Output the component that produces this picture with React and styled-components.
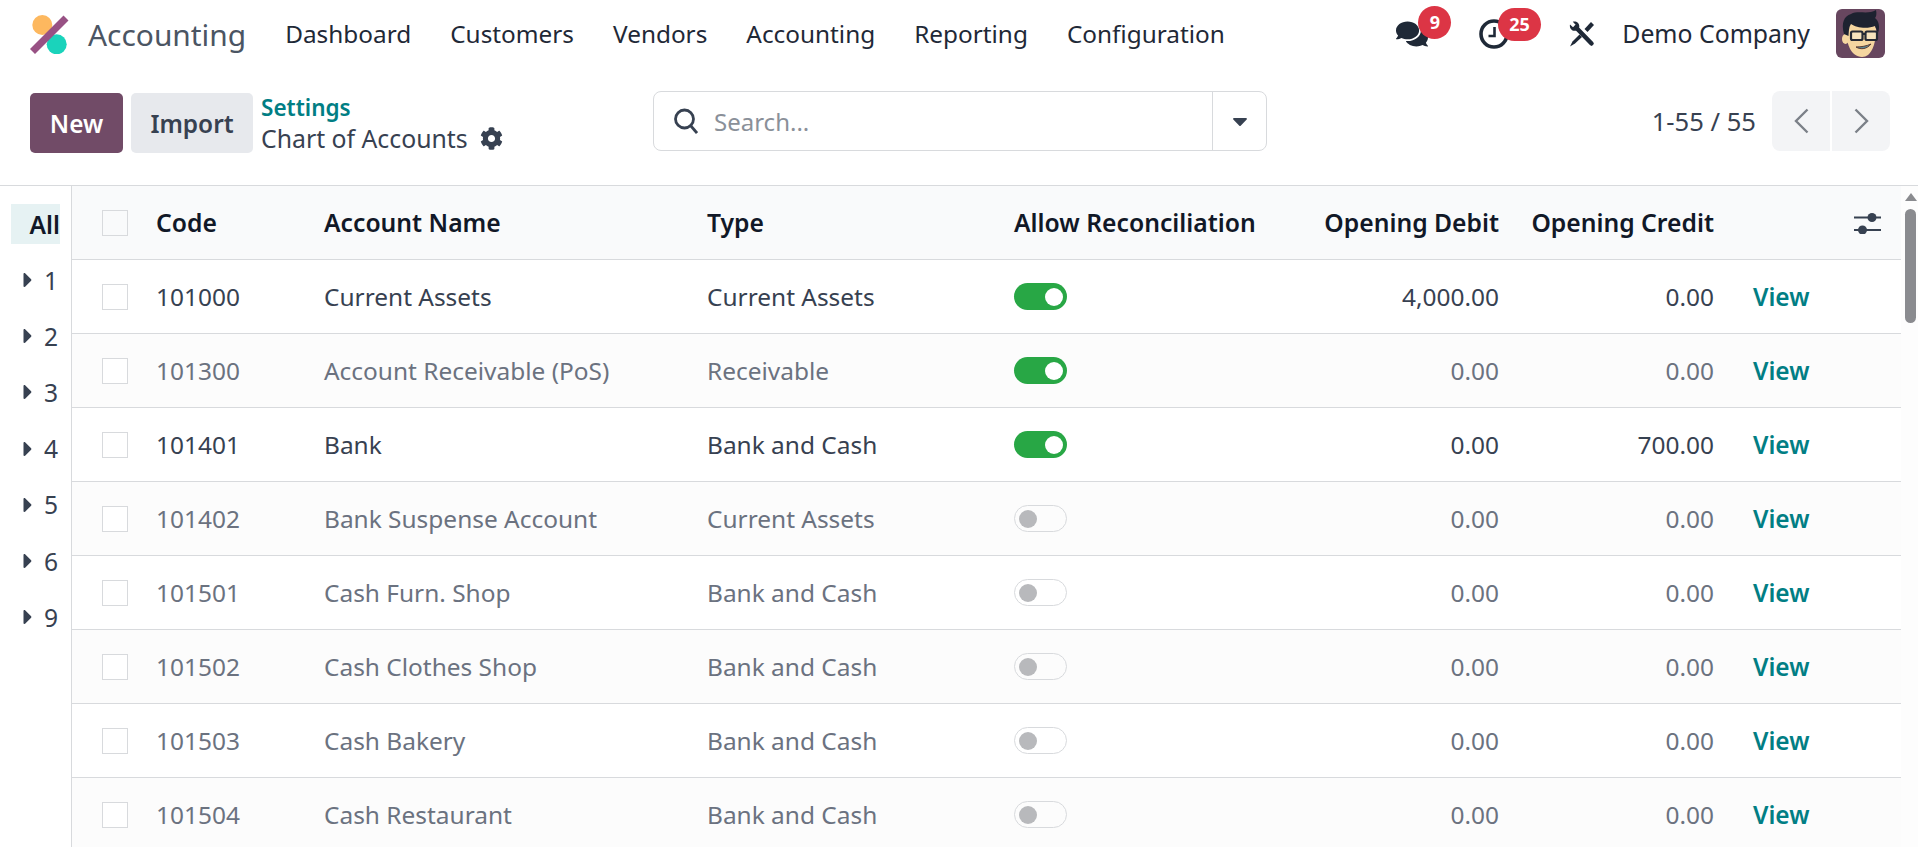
import React from "react";
import styled, { createGlobalStyle } from "styled-components";
import { FaComments, FaCog, FaCaretDown, FaCaretRight } from "react-icons/fa";

const Global = createGlobalStyle`
  html, body { margin: 0; padding: 0; background: #fff; }
  body { font-family: "Noto Sans", "Open Sans", sans-serif; color: #374151; overflow: hidden; }
  * { box-sizing: border-box; }
`;

const Page = styled.div`
  width: 1918px;
  height: 847px;
  display: flex;
  flex-direction: column;
  overflow: hidden;
`;

const NavBar = styled.header`
  height: 67px;
  flex: none;
  display: flex;
  align-items: center;
  padding: 0 33px 0 29px;
`;
const BrandLogo = styled.svg`
  width: 40px;
  height: 40px;
  flex: none;
`;
const BrandName = styled.span`
  margin: 2px 0 0 19px;
  font-size: 29.9px;
  color: #4b5563;
  line-height: 1;
`;
const Menu = styled.nav`
  display: flex;
  gap: 39px;
  margin: 0 0 1px 39px;
  font-size: 24.35px;
  color: #1f2937;
`;
const Tray = styled.div`
  margin-left: auto;
  display: flex;
  align-items: center;
`;
const TrayIcon = styled.div`
  position: relative;
  display: flex;
  color: #1f2937;
  margin-left: ${(p) => p.$ml}px;
`;
const Badge = styled.span`
  position: absolute;
  left: ${(p) => p.$left}px;
  top: ${(p) => p.$top}px;
  height: 33px;
  min-width: 33px;
  padding: 0 ${(p) => p.$pad}px;
  border-radius: 17px;
  background: #dc3545;
  color: #fff;
  font-size: 18px;
  font-weight: 700;
  display: flex;
  align-items: center;
  justify-content: center;
`;
const CompanyName = styled.span`
  margin: 0 0 1px 27px;
  font-size: 24.8px;
  color: #1f2937;
`;
const Avatar = styled.svg`
  width: 49px;
  height: 49px;
  margin-left: 26px;
  border-radius: 6px;
  flex: none;
`;

const ControlPanel = styled.section`
  height: 119px;
  flex: none;
  display: flex;
  align-items: flex-start;
  padding: 24px 28px 0 30px;
  border-bottom: 1px solid #d8dadd;
`;
const ButtonGroup = styled.div`
  display: flex;
  gap: 8px;
  margin-top: 2px;
`;
const Button = styled.button`
  height: 60px;
  width: ${(p) => p.$w}px;
  border: 0;
  padding: 0;
  border-radius: 5px;
  font: 600 24.4px "Noto Sans", sans-serif;
  color: ${(p) => (p.$primary ? "#fff" : "#374151")};
  background: ${(p) => (p.$primary ? "#714b67" : "#e7e9ed")};
`;
const Crumbs = styled.div`
  margin: 1px 0 0 8px;
  width: 392px;
  font-size: 24.8px;
  line-height: 31px;
`;
const CrumbLink = styled.div`
  color: #017e84;
  font-weight: 600;
  font-size: 22.5px;
`;
const CrumbCurrent = styled.div`
  display: flex;
  align-items: center;
  gap: 12px;
  color: #374151;
`;
const SearchBox = styled.div`
  width: 614px;
  height: 60px;
  display: flex;
  border: 1px solid #d8dadd;
  border-radius: 8px;
`;
const SearchField = styled.div`
  flex: 1;
  display: flex;
  align-items: center;
  gap: 16px;
  padding-left: 20px;
  font-size: 24px;
  color: #8a9099;
`;
const SearchToggle = styled.div`
  width: 54px;
  display: flex;
  align-items: center;
  justify-content: center;
  color: #374151;
  border-left: 1px solid #d8dadd;
`;
const Pager = styled.div`
  margin-left: auto;
  display: flex;
  align-items: center;
  gap: 16px;
  font-size: 25.6px;
  color: #374151;
`;
const PagerButtons = styled.div`
  display: flex;
  gap: 2px;
`;
const PagerButton = styled.div`
  width: 58px;
  height: 60px;
  display: flex;
  align-items: center;
  justify-content: center;
  background: #f3f4f6;
  border-radius: ${(p) => (p.$left ? "8px 0 0 8px" : "0 8px 8px 0")};
`;

const Main = styled.main`
  flex: 1;
  min-height: 0;
  display: flex;
`;
const Sidebar = styled.aside`
  width: 72px;
  flex: none;
  padding: 18px 11px 0 0;
  border-right: 1px solid #d8dadd;
  font-size: 24.6px;
  color: #374151;
`;
const SideAll = styled.div`
  margin-left: 11px;
  height: 40px;
  display: flex;
  align-items: center;
  justify-content: flex-end;
  background: #e6f2f3;
  font-weight: 600;
  color: #111827;
`;
const SideItem = styled.div`
  height: 56.2px;
  display: flex;
  align-items: center;
  padding-left: 16px;
  gap: 4px;
  margin-top: ${(p) => (p.$first ? "8px" : "0")};
`;
const TableArea = styled.div`
  flex: 1;
  min-width: 0;
`;
const COLS = "84px 168px 383px 307px 276px 209px 215px 1fr";
const HeadRow = styled.div`
  display: grid;
  grid-template-columns: ${COLS};
  align-items: center;
  height: 74.05px;
  background: #f9fafb;
  border-bottom: 1px solid #d8dadd;
  font-weight: 600;
  font-size: 24.7px;
  color: #111827;
`;
const Row = styled.div`
  display: grid;
  grid-template-columns: ${COLS};
  align-items: center;
  height: 74.05px;
  background: ${(p) => (p.$striped ? "#fcfcfc" : "#fff")};
  border-bottom: 1px solid #d8dadd;
  font-size: 24.45px;
  color: ${(p) => (p.$muted ? "#6b7280" : "#374151")};
`;
const CheckCell = styled.div`
  padding-left: 30px;
  display: flex;
`;
const Check = styled.span`
  width: 26px;
  height: 26px;
  border: 1px solid #d8dadd;
  background: ${(p) => (p.$head ? "#f9fafb" : "#fff")};
`;
const Cell = styled.div`
  text-align: ${(p) => (p.$right ? "right" : "left")};
  white-space: nowrap;
`;
const HeadAction = styled.div`
  display: flex;
  justify-content: flex-end;
  padding-right: 20px;
  color: #374151;
`;
const ViewLink = styled.div`
  padding-left: 39px;
  color: #017e84;
  font-weight: 600;
`;
const Toggle = styled.span`
  display: flex;
  align-items: center;
  justify-content: ${(p) => (p.$on ? "flex-end" : "flex-start")};
  width: 53px;
  height: 27px;
  padding: 0 4px;
  border-radius: 14px;
  background: ${(p) => (p.$on ? "#28a745" : "transparent")};
  border: ${(p) => (p.$on ? "0" : "1px solid #d8dadd")};
`;
const Knob = styled.span`
  width: 18px;
  height: 18px;
  border-radius: 50%;
  background: ${(p) => (p.$on ? "#fff" : "#b8b9bc")};
`;
const ScrollColumn = styled.div`
  width: 17px;
  flex: none;
  background: #fdfdfd;
  padding: 7px 1px 0 3px;
  display: flex;
  flex-direction: column;
  align-items: center;
`;
const ScrollArrow = styled.span`
  width: 0;
  height: 0;
  border-left: 6.5px solid transparent;
  border-right: 6.5px solid transparent;
  border-bottom: 8px solid #8a8b8f;
`;
const ScrollThumb = styled.span`
  margin-top: 8px;
  width: 11px;
  height: 114px;
  border-radius: 6px;
  background: #8a8b8f;
`;

const rows = [
  ["101000", "Current Assets", "Current Assets", true, "4,000.00", "0.00", false],
  ["101300", "Account Receivable (PoS)", "Receivable", true, "0.00", "0.00", true],
  ["101401", "Bank", "Bank and Cash", true, "0.00", "700.00", false],
  ["101402", "Bank Suspense Account", "Current Assets", false, "0.00", "0.00", true],
  ["101501", "Cash Furn. Shop", "Bank and Cash", false, "0.00", "0.00", true],
  ["101502", "Cash Clothes Shop", "Bank and Cash", false, "0.00", "0.00", true],
  ["101503", "Cash Bakery", "Bank and Cash", false, "0.00", "0.00", true],
  ["101504", "Cash Restaurant", "Bank and Cash", false, "0.00", "0.00", true],
];

const Logo = () => (
  <BrandLogo viewBox="0 0 40 40">
    <circle cx="13.3" cy="11" r="10" fill="#fdb85f" />
    <circle cx="27.7" cy="30.3" r="10" fill="#1ad3bb" />
    <path d="M37 4 L3.5 37.5" stroke="#985184" strokeWidth="7" />
  </BrandLogo>
);

const Clock = () => (
  <svg width="30" height="30" viewBox="0 0 30 30">
    <circle cx="15" cy="15" r="13" fill="none" stroke="#1f2937" strokeWidth="3.6" />
    <path d="M15.5 8 V17 H9.5" fill="none" stroke="#1f2937" strokeWidth="2.6" />
  </svg>
);

const Tools = () => (
  <svg width="26" height="26" viewBox="0 0 26 26">
    <path d="M7 6.5 L22.5 22.5" stroke="#1f2937" strokeWidth="4.5" strokeLinecap="round" />
    <path d="M1 3.5 L4 6.2 L6.6 3.8 L3.8 0.8 C7 -0.3 10.5 2 10.3 5.5 C10.2 8.5 6.5 10.8 3.5 9.4 C1.5 8.5 0.4 6 1 3.5 Z" fill="#1f2937" />
    <path d="M22 1 L25 4 L18.5 11 L15.5 8 Z" fill="#1f2937" />
    <path d="M10.5 13.5 L13 16 L6 22.5 L1 25.5 L3.5 20.5 Z" fill="#1f2937" />
  </svg>
);

const SearchIcon = () => (
  <svg width="24" height="26" viewBox="0 0 24 26">
    <circle cx="10.5" cy="11" r="9" fill="none" stroke="#374151" strokeWidth="2.8" />
    <path d="M16.5 17.5 L23 25" stroke="#374151" strokeWidth="2.8" />
  </svg>
);

const Sliders = () => (
  <svg width="27" height="22" viewBox="0 0 27 22">
    <path d="M0 5.5 H27 M0 18 H27" stroke="#374151" strokeWidth="2" />
    <circle cx="18" cy="5.5" r="4.5" fill="#374151" />
    <circle cx="8.5" cy="18" r="4.5" fill="#374151" />
  </svg>
);

const Chevron = ({ left }) => (
  <svg width="15" height="26" viewBox="0 0 15 26">
    <path d={left ? "M13.5 1.5 L2 13 L13.5 24.5" : "M1.5 1.5 L13 13 L1.5 24.5"} fill="none" stroke="#7b8088" strokeWidth="2.4" />
  </svg>
);

const Face = () => (
  <Avatar viewBox="0 0 49 49">
    <rect width="49" height="49" fill="#67465f" />
    <path d="M11 18 C9 34 15 48 26 48 C35 48 40 36 40 20 L37 12 L14 12 Z" fill="#f5d6a0" />
    <ellipse cx="9.5" cy="30" rx="3.5" ry="5" fill="#f5d6a0" />
    <path d="M8 25 C5 14 8 7 15 5 C22 1 32 6 40 1 C41 5 40 8 39 9 C43 12 44 18 42 24 L39 17 C32 20 20 19 15 15 C13 18 13 21 12.5 27 Z" fill="#1d2230" />
    <rect x="15" y="22.5" width="11.5" height="8.5" rx="1.5" fill="#f7e3bd" stroke="#262a35" strokeWidth="2.2" />
    <rect x="29.5" y="22.5" width="11.5" height="8.5" rx="1.5" fill="#f7e3bd" stroke="#262a35" strokeWidth="2.2" />
    <path d="M26.5 25 H29.5" stroke="#262a35" strokeWidth="2" />
    <path d="M20 38 C25 41 31 40 35 35 C31 37 25 38 20 38 Z" fill="#5a8c9a" stroke="#5b3a32" strokeWidth="1" />
  </Avatar>
);

export default function App() {
  return (
    <Page>
      <Global />
      <NavBar>
        <Logo />
        <BrandName>Accounting</BrandName>
        <Menu>
          <span>Dashboard</span>
          <span>Customers</span>
          <span>Vendors</span>
          <span>Accounting</span>
          <span>Reporting</span>
          <span>Configuration</span>
        </Menu>
        <Tray>
          <TrayIcon $ml={0}>
            <FaComments size={32} />
            <Badge $left={22} $top={-12} $pad={7}>9</Badge>
          </TrayIcon>
          <TrayIcon $ml={51}>
            <Clock />
            <Badge $left={19} $top={-11} $pad={11}>25</Badge>
          </TrayIcon>
          <TrayIcon $ml={60}>
            <Tools />
          </TrayIcon>
          <CompanyName>Demo Company</CompanyName>
          <Face />
        </Tray>
      </NavBar>
      <ControlPanel>
        <ButtonGroup>
          <Button $primary $w={93}>New</Button>
          <Button $w={122}>Import</Button>
        </ButtonGroup>
        <Crumbs>
          <CrumbLink>Settings</CrumbLink>
          <CrumbCurrent>Chart of Accounts <FaCog size={23} /></CrumbCurrent>
        </Crumbs>
        <SearchBox>
          <SearchField>
            <SearchIcon />
            Search...
          </SearchField>
          <SearchToggle><FaCaretDown size={24} /></SearchToggle>
        </SearchBox>
        <Pager>
          1-55 / 55
          <PagerButtons>
            <PagerButton $left><Chevron left /></PagerButton>
            <PagerButton><Chevron /></PagerButton>
          </PagerButtons>
        </Pager>
      </ControlPanel>
      <Main>
        <Sidebar>
          <SideAll>All</SideAll>
          {["1", "2", "3", "4", "5", "6", "9"].map((n, i) => (
            <SideItem key={n} $first={i === 0}><FaCaretRight size={24} />{n}</SideItem>
          ))}
        </Sidebar>
        <TableArea>
          <HeadRow>
            <CheckCell><Check $head /></CheckCell>
            <Cell>Code</Cell>
            <Cell>Account Name</Cell>
            <Cell>Type</Cell>
            <Cell>Allow Reconciliation</Cell>
            <Cell $right>Opening Debit</Cell>
            <Cell $right>Opening Credit</Cell>
            <HeadAction><Sliders /></HeadAction>
          </HeadRow>
          {rows.map((r, i) => (
            <Row key={r[0]} $striped={i % 2 === 1} $muted={r[6]}>
              <CheckCell><Check /></CheckCell>
              <Cell>{r[0]}</Cell>
              <Cell>{r[1]}</Cell>
              <Cell>{r[2]}</Cell>
              <Cell><Toggle $on={r[3]}><Knob $on={r[3]} /></Toggle></Cell>
              <Cell $right>{r[4]}</Cell>
              <Cell $right>{r[5]}</Cell>
              <ViewLink>View</ViewLink>
            </Row>
          ))}
        </TableArea>
        <ScrollColumn>
          <ScrollArrow />
          <ScrollThumb />
        </ScrollColumn>
      </Main>
    </Page>
  );
}
